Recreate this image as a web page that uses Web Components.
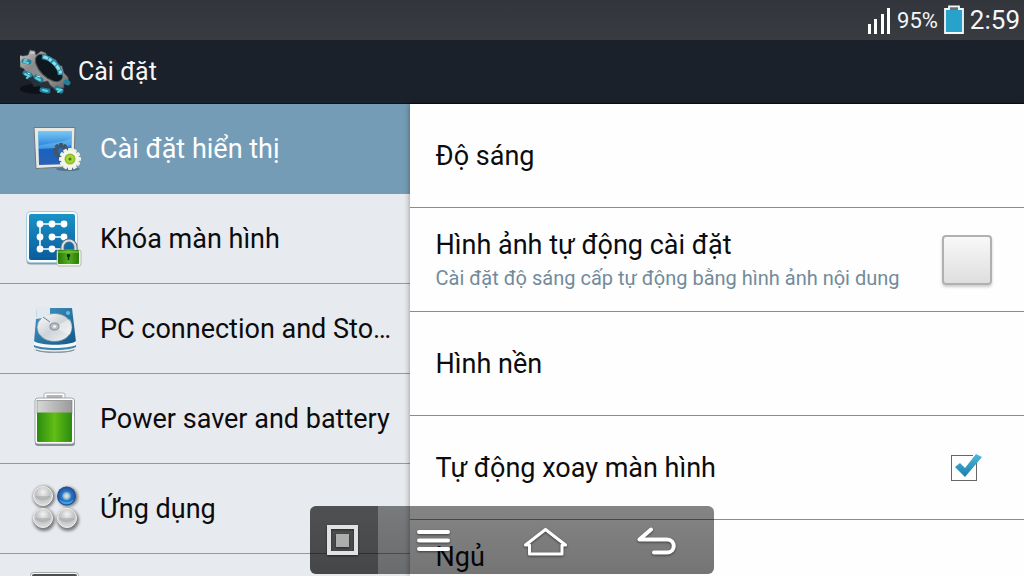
<!DOCTYPE html>
<html lang="vi">
<head>
<meta charset="utf-8">
<meta name="viewport" content="width=device-width, initial-scale=1">
<title>Cài đặt</title>
<style>
  body {
    margin: 0;
    height: 100vh;
    overflow: hidden;
    font-family: Roboto, "Noto Sans", sans-serif;
    background: #fff;
    color: #0c0c0e;
  }
</style>
</head>
<body>
<settings-app>
  <status-bar slot="top" level="95%" time="2:59"></status-bar>
  <title-bar slot="top">Cài đặt</title-bar>

  <menu-item slot="menu" icon="display" active>Cài đặt hiển thị</menu-item>
  <menu-item slot="menu" icon="lock">Khóa màn hình</menu-item>
  <menu-item slot="menu" icon="disk">PC connection and Storage</menu-item>
  <menu-item slot="menu" icon="battery">Power saver and battery</menu-item>
  <menu-item slot="menu" icon="apps">Ứng dụng</menu-item>
  <menu-item slot="menu" icon="device"></menu-item>

  <option-row>Độ sáng</option-row>
  <check-row kind="large">Hình ảnh tự động cài đặt
    <span slot="note">Cài đặt độ sáng cấp tự động bằng hình ảnh nội dung</span>
  </check-row>
  <option-row>Hình nền</option-row>
  <check-row kind="small" checked>Tự động xoay màn hình</check-row>
  <option-row two-line>Ngủ</option-row>

  <nav-overlay slot="overlay"></nav-overlay>
</settings-app>

<script>
const gearTeeth = (cx, cy, r, n, fill) => {
  let out = '';
  for (let i = 0; i < n; i++) {
    out += `<rect x="${cx - 2}" y="${cy - r}" width="4" height="5" rx="1" fill="${fill}" transform="rotate(${i * 360 / n} ${cx} ${cy})"/>`;
  }
  return out;
};

const icons = {
  display: `
    <defs>
      <linearGradient id="sky" x1="0" y1="0" x2="0" y2="1">
        <stop offset="0" stop-color="#79c8f4"/><stop offset=".45" stop-color="#2b86dc"/>
        <stop offset=".55" stop-color="#1a62c0"/><stop offset="1" stop-color="#2a62b4"/>
      </linearGradient>
    </defs>
    <ellipse cx="44" cy="50" rx="12" ry="2" fill="#3d5a70" opacity=".6"/>
    <path d="M10 8.5h41l-1 39-38 2z" fill="#e9e9e4" stroke="#6d7880" stroke-width="1"/>
    <path d="M14 12h34l-1 33-32 1z" fill="url(#sky)"/>
    <path d="M14 27c12-4 22-2 33-8v7c-12 4-22 3-33 4z" fill="#7fd0f6" opacity=".4"/>
    ${gearTeeth(37, 32, 8, 9, '#42566b')}
    <circle cx="37" cy="32" r="6" fill="#42566b"/><circle cx="37" cy="32" r="3" fill="#2d6bb8"/>
    ${gearTeeth(46, 40, 11, 12, '#eef1e6')}
    <circle cx="46" cy="40" r="9" fill="#f4f5ee"/>
    <circle cx="46" cy="40" r="5.5" fill="#8cbf26"/>
    <circle cx="46" cy="40" r="4" fill="#a6d635"/>
    <circle cx="46" cy="40" r="1.5" fill="#4d7a15"/>`,
  lock: `
    <defs>
      <linearGradient id="blue" x1="0" y1="0" x2="0" y2="1">
        <stop offset="0" stop-color="#1a93c6"/><stop offset="1" stop-color="#0a5c9c"/>
      </linearGradient>
      <linearGradient id="body" x1="0" y1="0" x2="1" y2="0">
        <stop offset="0" stop-color="#2a7a0c"/><stop offset=".5" stop-color="#54b01c"/><stop offset="1" stop-color="#2a7a0c"/>
      </linearGradient>
    </defs>
    <rect x="2.5" y="3.5" width="51" height="52" rx="4" fill="#8d9aa3"/>
    <rect x="2.5" y="2.5" width="51" height="51" rx="4" fill="#f6fbfd" stroke="#a9cfdf"/>
    <rect x="5" y="5" width="46" height="46" rx="2" fill="url(#blue)"/>
    <path d="M40 15H16v25h24M28 28h12" fill="none" stroke="#fff" stroke-width="1.5"/>
    <g fill="#fff"><circle cx="16" cy="15" r="3.4"/><circle cx="28" cy="15" r="3.4"/><circle cx="40" cy="15" r="3.4"/>
      <circle cx="16" cy="28" r="3.4"/><circle cx="28" cy="28" r="3.4"/><circle cx="40" cy="28" r="3.4"/>
      <circle cx="16" cy="40" r="3.4"/><circle cx="28" cy="40" r="3.4"/></g>
    <rect x="33" y="41" width="24" height="16" rx="2" fill="#f3f8ef" stroke="#a4ada0" stroke-width=".8"/>
    <path d="M38.5 42v-4a6.5 6.5 0 0 1 13 0v4" fill="none" stroke="#5e6e78" stroke-width="4"/>
    <path d="M38.5 42v-4a6.5 6.5 0 0 1 13 0v4" fill="none" stroke="#d5dfe3" stroke-width="2.2"/>
    <rect x="34" y="41" width="21" height="14" rx="1" fill="url(#body)"/>
    <path d="M34 43h21" stroke="#8ad450" stroke-width="1"/>
    <circle cx="44.5" cy="46.5" r="1.7" fill="#102c05"/><path d="M44.5 47v4" stroke="#102c05" stroke-width="1.5"/>`,
  disk: `
    <defs>
      <linearGradient id="case" x1="0" y1="0" x2="1" y2="1">
        <stop offset="0" stop-color="#4297c4"/><stop offset="1" stop-color="#135786"/>
      </linearGradient>
      <linearGradient id="plate" x1="0" y1="0" x2="1" y2="1">
        <stop offset="0" stop-color="#fff"/><stop offset=".5" stop-color="#cdd3d8"/><stop offset="1" stop-color="#f3f5f6"/>
      </linearGradient>
    </defs>
    <path d="M10 42h42v8c-5 5-37 5-42 0z" fill="#a9b9c3"/>
    <path d="M13 9h35l4 34c-6 6-36 6-42 0z" fill="url(#case)"/>
    <ellipse cx="30.5" cy="28.5" rx="17.5" ry="14" fill="url(#plate)" stroke="#6f8797" stroke-width=".7"/>
    <path d="M30 28l16-8c3 6 2 12-1 16z" fill="#fff" opacity=".4"/>
    <ellipse cx="30.5" cy="27.5" rx="4.5" ry="3.5" fill="#b4bec5" stroke="#7e8b94" stroke-width="1"/>
    <ellipse cx="30.5" cy="27.5" rx="1.7" ry="1.2" fill="#f4f6f7"/>
    <path d="M13 8h13v7l-4 3 5 4-1 1-7-4-7 1z" fill="#e2e9ee"/>
    <path d="M19 18l7 5" stroke="#73828d" stroke-width="1"/>
    <circle cx="44" cy="14" r="2" fill="#6fb6da"/>
    <path d="M10 42c6 5 36 5 42 0v4c-6 5-36 5-42 0z" fill="#f6f8f9"/>
    <path d="M10 46c7 4 35 4 42 0v2c-7 4-35 4-42 0z" fill="#3a84ad"/>
    <path d="M10 49c7 4 35 4 42 0" fill="none" stroke="#e9eef1" stroke-width="1.5"/>
    <path d="M12 51c7 3 31 3 38 0" fill="none" stroke="#7e8e98" stroke-width="1.2"/>`,
  battery: `
    <defs>
      <linearGradient id="charge" x1="0" y1="0" x2="1" y2="0">
        <stop offset="0" stop-color="#2a8c10"/><stop offset=".5" stop-color="#62bd14"/><stop offset="1" stop-color="#2a8c10"/>
      </linearGradient>
      <linearGradient id="empty" x1="0" y1="0" x2="1" y2="0">
        <stop offset="0" stop-color="#d7d7d7"/><stop offset="1" stop-color="#9a9a9a"/>
      </linearGradient>
    </defs>
    <rect x="11" y="10" width="40" height="47" rx="3" fill="#8a8f91"/>
    <rect x="20" y="4" width="21" height="9" rx="2" fill="#fff" stroke="#9da2a4" stroke-width=".8"/>
    <rect x="22.5" y="6" width="16" height="3" fill="#b5b5b5"/>
    <rect x="11" y="9" width="39.5" height="46" rx="3" fill="#fff" stroke="#8e9698" stroke-width=".8"/>
    <rect x="13" y="11.5" width="35" height="13" fill="url(#empty)" stroke="#777" stroke-width=".6"/>
    <rect x="13" y="23.5" width="35" height="29.5" rx="1" fill="url(#charge)"/>`,
  apps: `
    <defs>
      <radialGradient id="ball" cx=".5" cy=".3" r=".7">
        <stop offset="0" stop-color="#f2f2f2"/><stop offset=".55" stop-color="#c0c1c2"/><stop offset="1" stop-color="#dedede"/>
      </radialGradient>
      <radialGradient id="lit" cx=".5" cy=".5" r=".5">
        <stop offset="0" stop-color="#f0ead0"/><stop offset=".3" stop-color="#a0c2d8"/>
        <stop offset=".5" stop-color="#2c77c6"/><stop offset="1" stop-color="#1b4c9a"/>
      </radialGradient>
      <filter id="soft" x="-20%" y="-20%" width="140%" height="140%"><feGaussianBlur stdDeviation="1.5"/></filter>
    </defs>
    <g fill="#555" opacity=".75" filter="url(#soft)"><circle cx="20" cy="18" r="11"/><circle cx="44" cy="18" r="10"/><circle cx="20" cy="41" r="11"/><circle cx="44" cy="41" r="11"/></g>
    <g fill="url(#ball)" stroke="#f1f1f1" stroke-width="1"><circle cx="19" cy="17" r="9.5"/><circle cx="19" cy="39" r="9.5"/><circle cx="43" cy="39" r="9.5"/></g>
    <circle cx="42.5" cy="17" r="9.5" fill="url(#lit)"/>
    <path d="M35 20a8 8 0 0 0 15 0c-4 4-11 4-15 0z" fill="#43b1ee" opacity=".8"/>
    <g fill="#a3a5a7" opacity=".5"><path d="M11 17h16a8 4 0 0 1-16 0z"/><path d="M11 39h16a8 4 0 0 1-16 0z"/><path d="M35 39h16a8 4 0 0 1-16 0z"/></g>`,
  device: `
    <rect x="6.5" y="3.5" width="48" height="54" rx="3" fill="#f6f6f6" stroke="#a5a9ac"/>
    <rect x="8" y="5" width="45" height="51" rx="2" fill="#4a4f50"/>`
};

customElements.define('settings-app', class extends HTMLElement {
  constructor() {
    super();
    this.attachShadow({ mode: 'open' }).innerHTML = `
<style>
  :host {
    display: flex;
    flex-direction: column;
    position: relative;
    height: 100%;
    overflow: hidden;
  }
  .panes {
    display: flex;
    flex: 1;
    min-height: 0;
  }
  nav {
    box-sizing: border-box;
    flex: 0 0 40%;
    overflow: hidden;
    background: #e7eaee;
  }
  main {
    flex: 1;
    min-width: 0;
    overflow: hidden;
    background: #fefefe;
    box-shadow: 0 0 6px rgba(0, 0, 0, .4);
  }
</style>
<slot name="top"></slot>
<div class="panes">
  <nav><slot name="menu"></slot></nav>
  <main><slot></slot></main>
</div>
<slot name="overlay"></slot>`;
  }
});

customElements.define('status-bar', class extends HTMLElement {
  constructor() {
    super();
    this.attachShadow({ mode: 'open' }).innerHTML = `
<style>
  :host {
    display: flex;
    flex: none;
    align-items: center;
    justify-content: flex-end;
    gap: 6px;
    box-sizing: border-box;
    height: 40px;
    padding: 0 4px;
    background: linear-gradient(#32363c, #383c41);
    color: #f4f6f8;
  }
  .level { font-size: 22px; }
  .time { font-size: 26px; }
  svg { display: block; }
</style>
<svg width="24" height="28" viewBox="0 0 24 28" fill="#fff">
  <path d="M1 18h3v10H1zM7 13h3v15H7zM14 8h3v20h-3zM20 2h3v26h-3z"/>
</svg>
<span class="level">${this.getAttribute('level')}</span>
<svg width="20" height="30" viewBox="0 0 20 30">
  <path d="M1 4h4V1.5h10V4h4v24H1z" fill="#27a3cb" stroke="#f4f6f8" stroke-width="1.8"/>
  <path d="M6 2.5h8V5H6z" fill="#6b7072"/>
</svg>
<span class="time">${this.getAttribute('time')}</span>`;
  }
});

customElements.define('title-bar', class extends HTMLElement {
  constructor() {
    super();
    this.attachShadow({ mode: 'open' }).innerHTML = `
<style>
  :host {
    display: flex;
    flex: none;
    align-items: center;
    gap: 6px;
    box-sizing: border-box;
    height: 64px;
    padding: 0 20px;
    background: #1a212a;
    border-bottom: 1px solid #0c1116;
    color: #f4f6f8;
  }
  h1 {
    margin: 0;
    font-size: 25px;
    font-weight: 400;
  }
  svg { display: block; }
</style>
<svg width="52" height="52" viewBox="0 0 52 52">
  <defs>
    <linearGradient id="metal" x1="0" y1="0" x2="1" y2="1">
      <stop offset="0" stop-color="#d2d2d0"/><stop offset=".35" stop-color="#8a8a89"/>
      <stop offset=".7" stop-color="#989491"/><stop offset="1" stop-color="#5c5e60"/>
    </linearGradient>
  </defs>
  <ellipse cx="16" cy="43" rx="16" ry="5" fill="#06090d" opacity=".6"/>
  <!-- far side of the wheel, seen below the front face -->
  <path d="M3 14l-1 6 5 3-3 4 1 6 6 2 3 6 6-1 1 6 7 1 4-5 5 5 6-2 2-7 4-4z" fill="#26323b"/>
  <path d="M3 10l5-1 2-5 5 1 1 4 5-4 5 2 1 4 5 1 4 2 2 5 4 1 2 7 4 4 1 5-5 1 0 5-5 0-4 1-5-4-2-4-5 1-3-5-5 1-4-4-5 0-2-5-4-2 0-6-3-3-1-4z" fill="url(#metal)" stroke="#3f4548" stroke-width=".6"/>
  <g transform="translate(29 22) rotate(45)" fill="none">
    <ellipse rx="17" ry="9" fill="#0f171e" stroke="#4b5358" stroke-width="1"/>
    <path d="M-13-3C-6-9 7-9 13-3" stroke="#2a8aa8" stroke-width="5"/>
    <path d="M-12-4C-6-8 7-8 13-4" stroke="#8fe0e4" stroke-width="3" stroke-dasharray="5 1 3 2 4 1"/>
  </g>
  <g stroke-linecap="round" fill="none">
    <path d="M4 15l5 1M5 27l5 2M16 31l5 3M22 44l6 1M37 42l4 3M46 36l2 1" stroke="#1f7f9c" stroke-width="5"/>
    <path d="M4 16l4 1M5 28l4 2-2 2M16 32l4 2M23 44l4 1M37 43l4 1-3 2" stroke="#62d0d8" stroke-width="2"/>
    <path d="M4 14l3 0M8 27l2 1M17 30l3 1M11 7l3 0" stroke="#d0f5f3" stroke-width="1"/>
  </g>
</svg>
<h1><slot></slot></h1>`;
  }
});

customElements.define('menu-item', class extends HTMLElement {
  constructor() {
    super();
    this.attachShadow({ mode: 'open' }).innerHTML = `
<style>
  :host { display: block; }
  a {
    display: flex;
    align-items: center;
    gap: 16px;
    box-sizing: border-box;
    height: 90px;
    padding: 0 12px 0 24px;
    border-bottom: 1px solid #96999c;
    color: inherit;
    font-size: 27px;
    text-decoration: none;
  }
  :host([active]) a {
    background: #759cb6;
    border-color: #759cb6;
    color: #fff;
  }
  svg { flex: none; }
  span {
    flex: 1;
    min-width: 0;
    overflow: hidden;
    text-overflow: ellipsis;
    white-space: nowrap;
  }
</style>
<a href="#${this.getAttribute('icon')}">
  <svg width="60" height="60" viewBox="0 0 60 60">${icons[this.getAttribute('icon')]}</svg>
  <span><slot></slot></span>
</a>`;
  }
});

// shared by both kinds of rows in the right pane
const rowStyle = `
  :host { display: block; }
  .row {
    display: flex;
    align-items: center;
    justify-content: space-between;
    box-sizing: border-box;
    width: 100%;
    height: 104px;
    padding: 0 32px 0 26px;
    border: 0;
    border-bottom: 1px solid #8c8c8c;
    background: none;
    color: inherit;
    font: inherit;
    font-size: 27px;
    line-height: 36px;
    text-align: left;
  }
  .note {
    display: block;
    color: #728a9b;
    font-size: 20px;
    line-height: 30px;
  }
`;

customElements.define('option-row', class extends HTMLElement {
  constructor() {
    super();
    this.attachShadow({ mode: 'open' }).innerHTML = `
<style>
  ${rowStyle}
  :host([two-line]) .row { padding-bottom: 30px; }
</style>
<button class="row" type="button"><span><slot></slot></span></button>`;
  }
});

customElements.define('check-row', class extends HTMLElement {
  constructor() {
    super();
    this.attachShadow({ mode: 'open' }).innerHTML = `
<style>
  ${rowStyle}
  .box {
    display: grid;
    flex: none;
    place-items: center;
    width: 50px;
    height: 50px;
  }
  .box > * { grid-area: 1 / 1; }
  input {
    appearance: none;
    box-sizing: border-box;
    margin: 0;
    width: 50px;
    height: 50px;
    border: 2px solid #b0b0b0;
    border-radius: 4px;
    background: linear-gradient(#f8f8f8, #dedede);
    box-shadow: 0 2px 3px rgba(0, 0, 0, .2);
  }
  :host([kind=small]) input {
    width: 26px;
    height: 26px;
    margin-right: 6px;
    border: 1px solid #666;
    border-radius: 0;
    background: #fff;
    box-shadow: none;
  }
  svg {
    display: none;
    pointer-events: none;
  }
  input:checked + svg { display: block; }
</style>
<label class="row" for="check">
  <span><slot></slot><span class="note"><slot name="note"></slot></span></span>
  <span class="box">
    <input type="checkbox" id="check">
    <svg width="50" height="50" viewBox="0 0 50 50">
      <defs><linearGradient id="tick" x1="0" y1="0" x2="0" y2="1">
        <stop offset="0" stop-color="#4fb9dc"/><stop offset="1" stop-color="#197fa8"/>
      </linearGradient></defs>
      <path d="M31 11h5v9h-5z" fill="#fff"/>
      <path d="M13 24l5-4 5 5 11-14 6 3-17 20z" fill="url(#tick)"/>
    </svg>
  </span>
</label>`;
    this.shadowRoot.querySelector('input').checked = this.hasAttribute('checked');
  }
});

customElements.define('nav-overlay', class extends HTMLElement {
  constructor() {
    super();
    this.attachShadow({ mode: 'open' }).innerHTML = `
<style>
  :host {
    position: absolute;
    bottom: 2px;
    left: 0;
    right: 0;
    display: flex;
    justify-content: center;
    pointer-events: none;
  }
  .bar {
    display: flex;
    height: 68px;
    border-radius: 6px;
    overflow: hidden;
    background: linear-gradient(rgba(0, 0, 0, .48), rgba(0, 0, 0, .54));
    pointer-events: auto;
  }
  button {
    display: grid;
    place-items: center;
    width: 112px;
    padding: 0;
    border: 0;
    background: none;
  }
  .recent {
    width: 68px;
    background: rgba(0, 0, 0, .34);
  }
  svg {
    display: block;
    fill: none;
    stroke: #fff;
    stroke-width: 4px;
    stroke-linejoin: round;
    filter: drop-shadow(0 1px 1px rgba(0, 0, 0, .5));
  }
</style>
<div class="bar">
  <button class="recent" type="button" aria-label="Recent">
    <svg width="48" height="48" viewBox="0 0 48 48">
      <path d="M9 11h27v26H9z" stroke="#dfe3e1" stroke-linejoin="miter"/>
      <path d="M16 18h13v13H16z" fill="#abaeac" stroke="none"/>
    </svg>
  </button>
  <button type="button" aria-label="Menu">
    <svg width="48" height="48" viewBox="0 0 48 48"><path d="M9 16h29M9 24.5h29M9 33h29" stroke-linecap="round"/></svg>
  </button>
  <button type="button" aria-label="Home">
    <svg width="48" height="48" viewBox="0 0 48 48"><path d="M3.5 29L23.5 13.5l20 15.5H40v9H7.5v-9z" style="stroke-width: 3px"/></svg>
  </button>
  <button type="button" aria-label="Back">
    <svg width="48" height="48" viewBox="0 0 48 48"><path d="M17 13.5L5.5 23.500H33c9 0 9 13 0 13H20" stroke-linecap="round"/></svg>
  </button>
</div>`;
  }
});
</script>
</body>
</html>
